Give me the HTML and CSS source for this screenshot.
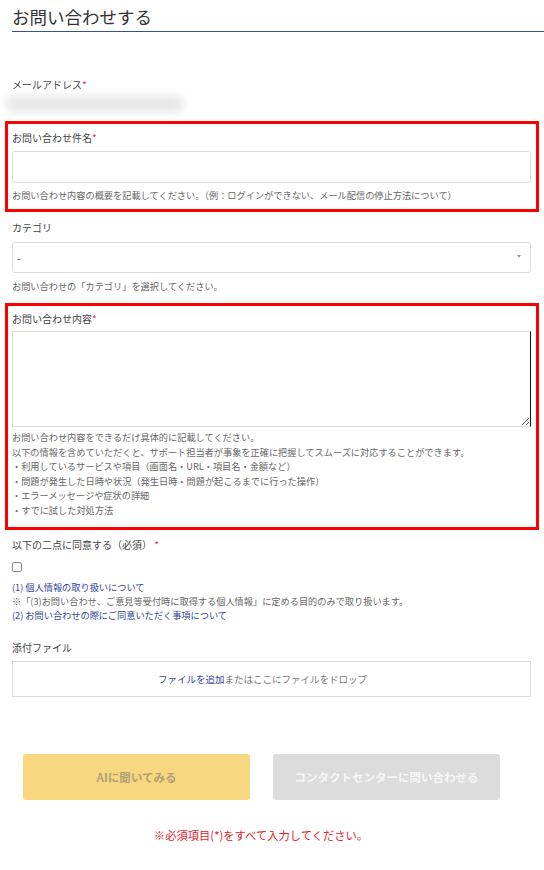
FILE: index.html
```html
<!DOCTYPE html>
<html lang="ja">
<head>
    <meta charset="UTF-8">
    <meta name="viewport" content="width=device-width, initial-scale=1.0">
    <title>お問い合わせする</title>
    <link rel="stylesheet" href="styles.css">
</head>
<body>

    <div class="page">
        <div class="page-header">
            <h1>お問い合わせする</h1>
        </div>

        <!-- Email (already filled, hidden) -->
        <div class="field field-email">
            <label class="field-label">メールアドレス<span class="req">*</span></label>
            <div class="email-blur"></div>
        </div>

        <!-- Subject -->
        <div class="highlight highlight-subject">
            <label class="field-label" for="subject">お問い合わせ件名<span class="req">*</span></label>
            <input type="text" id="subject" class="text-input">
            <p class="help">お問い合わせ内容の概要を記載してください。（例：ログインができない、メール配信の停止方法について）</p>
        </div>

        <!-- Category -->
        <div class="field field-category">
            <label class="field-label" for="category">カテゴリ</label>
            <div class="select-wrap">
                <select id="category" class="select-input">
                    <option value="">-</option>
                </select>
                <span class="select-arrow"></span>
            </div>
            <p class="help">お問い合わせの「カテゴリ」を選択してください。</p>
        </div>

        <!-- Body -->
        <div class="highlight highlight-body">
            <label class="field-label" for="body">お問い合わせ内容<span class="req">*</span></label>
            <textarea id="body" class="textarea-input"></textarea>
            <p class="help help-list">
                お問い合わせ内容をできるだけ具体的に記載してください。<br>
                以下の情報を含めていただくと、サポート担当者が事象を正確に把握してスムーズに対応することができます。<br>
                ・利用しているサービスや項目（画面名・URL・項目名・金額など）<br>
                ・問題が発生した日時や状況（発生日時・問題が起こるまでに行った操作）<br>
                ・エラーメッセージや症状の詳細<br>
                ・すでに試した対処方法
            </p>
        </div>

        <!-- Agreement -->
        <div class="field field-agree">
            <label class="field-label">以下の二点に同意する（必須） <span class="req">*</span></label>
            <input type="checkbox" class="check">
            <p class="agree-text">
                <a href="#">(1) 個人情報の取り扱いについて</a><br>
                ※「(3)お問い合わせ、ご意見等受付時に取得する個人情報」に定める目的のみで取り扱います。<br>
                <a href="#">(2) お問い合わせの際にご同意いただく事項について</a>
            </p>
        </div>

        <!-- Attachment -->
        <div class="field field-file">
            <label class="field-label">添付ファイル</label>
            <div class="dropzone">
                <span><a href="#">ファイルを追加</a>またはここにファイルをドロップ</span>
            </div>
        </div>

        <div class="actions">
            <button class="btn btn-ai" disabled>AIに聞いてみる</button>
            <button class="btn btn-submit" disabled>コンタクトセンターに問い合わせる</button>
        </div>

        <p class="error">※必須項目(*)をすべて入力してください。</p>
    </div>

</body>
</html>
```

FILE: styles.css
```css
/* Base */
body {
    margin: 0;
    background-color: #fff;
    font-family: "Noto Sans CJK JP", "Noto Sans", sans-serif;
    color: #444;
}

.page {
    padding: 0 13px 0 12px;
}

/* Header */
.page-header {
    padding-top: 6px;
    padding-bottom: 3px;
    border-bottom: 1px solid #34509a;
    margin-right: -13px;
}

.page-header h1 {
    margin: 0;
    font-size: 17.5px;
    line-height: 22px;
    font-weight: normal;
    color: #333;
}

/* Fields */
.field-label {
    display: block;
    font-size: 10px;
    line-height: 14px;
    color: #444;
}

.req {
    color: #e8265e;
}

.help {
    margin: 5px 0 0;
    font-size: 9.2px;
    line-height: 14px;
    color: #666;
}

.field-email {
    margin-top: 46px;
}

.email-blur {
    width: 178px;
    height: 16px;
    margin: 4px 0 0 -6px;
    background-color: #e6e6e6;
    border-radius: 8px;
    filter: blur(4px);
}

/* Red annotation boxes */
.highlight {
    border: 3px solid #f00;
    margin-left: -7px;
    margin-right: -8px;
    padding: 7px 5px 7px 4px;
}

.highlight-subject {
    margin-top: 9px;
}

.highlight-body {
    margin-top: 10px;
    padding-top: 6px;
    padding-bottom: 9px;
}

.text-input {
    display: block;
    box-sizing: border-box;
    width: 100%;
    height: 32px;
    margin-top: 6px;
    border: 1px solid #ddd;
    border-radius: 3px;
    font-family: inherit;
}

/* Category */
.field-category {
    margin-top: 9px;
}

.select-wrap {
    position: relative;
    margin-top: 7px;
}

.select-input {
    display: block;
    box-sizing: border-box;
    width: 100%;
    height: 31px;
    padding: 0 8px 0 4px;
    border: 1px solid #ddd;
    border-radius: 3px;
    background-color: #fff;
    font-family: inherit;
    font-size: 10px;
    color: #333;
    appearance: none;
}

.select-arrow {
    position: absolute;
    right: 10px;
    top: 13px;
    border-left: 2.5px solid transparent;
    border-right: 2.5px solid transparent;
    border-top: 3px solid #999;
}

.field-category .help {
    margin-top: 6px;
}

/* Body */
.textarea-input {
    display: block;
    box-sizing: border-box;
    width: 100%;
    height: 96px;
    margin-top: 5px;
    border: 1px solid #ddd;
    border-right: 1px solid #111;
    border-radius: 0;
    font-family: inherit;
    resize: vertical;
}

.help-list {
    margin-top: 3px;
    line-height: 14.6px;
}

/* Agreement */
.field-agree {
    margin-top: 8px;
}

.check {
    display: block;
    appearance: none;
    width: 10px;
    height: 10px;
    margin: 10px 0 0;
    border: 1px solid #888;
    border-radius: 2px;
    box-sizing: border-box;
}

.agree-text {
    margin: 8px 0 0;
    font-size: 9.2px;
    line-height: 14.3px;
    color: #666;
}

.agree-text a {
    color: #34469a;
    text-decoration: none;
}

/* Attachment */
.field-file {
    margin-top: 19px;
}

.dropzone {
    display: flex;
    align-items: center;
    justify-content: center;
    box-sizing: border-box;
    height: 36px;
    margin-top: 6px;
    padding-right: 18px;
    border: 1px solid #ddd;
    font-size: 9.5px;
    color: #777;
}

.dropzone a {
    color: #34469a;
    text-decoration: none;
}

/* Buttons */
.actions {
    display: flex;
    gap: 23px;
    margin-top: 57px;
    padding-left: 11px;
}

.btn {
    width: 227px;
    height: 46px;
    border: none;
    border-radius: 3px;
    font-family: inherit;
    font-size: 11.5px;
    font-weight: bold;
}

.btn-ai {
    background-color: #f7d77f;
    color: #b1a173;
}

.btn-submit {
    background-color: #dcdcdc;
    color: #f6f6f6;
}

.error {
    width: 476px;
    margin: 27px 0 0 11px;
    text-align: center;
    font-size: 11.3px;
    line-height: 16px;
    color: #e3202c;
}
```
